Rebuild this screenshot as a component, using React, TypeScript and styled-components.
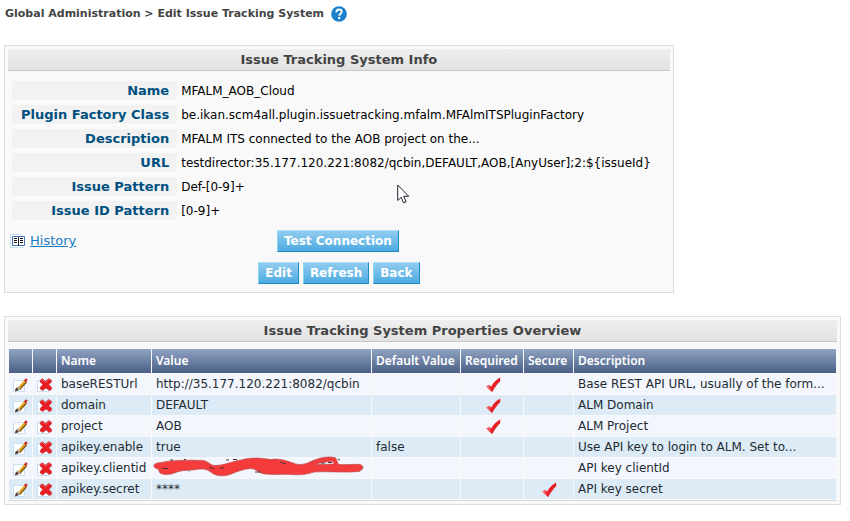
import React from "react";
import styled, { createGlobalStyle } from "styled-components";

const wide = `"DejaVu Sans", Verdana, sans-serif`;
const compact = `"Noto Sans", Tahoma, sans-serif`;

const GlobalStyle = createGlobalStyle`
  *, *::before, *::after { box-sizing: border-box; }
  body {
    margin: 0;
    background: #fff;
    color: #000;
    font-family: ${wide};
    font-size: 12px;
  }
`;

const Page = styled.main`
  display: flex;
  flex-direction: column;
  gap: 23px;
  padding: 6px 9px 16px 4px;
`;

const Breadcrumb = styled.header`
  display: flex;
  align-items: center;
  gap: 7px;
  height: 16px;
  color: #444;
  padding-left: 1px;
`;

const Crumbs = styled.h1`
  margin: 0;
  font-size: 11px;
  font-weight: 700;
  line-height: 16px;
  white-space: nowrap;
`;

const HelpLink = styled.a`
  display: block;
  width: 16px;
  height: 16px;
`;

const Panel = styled.section<{ $hug?: boolean }>`
  width: ${(p) => (p.$hug ? "fit-content" : "100%")};
  padding: 3px;
  background: #f9f9f9;
  border: 1px solid #ddd;
`;

const PanelTitle = styled.h2`
  margin: 0;
  height: 22px;
  border-bottom: 1px solid #c8c8c8;
  background: linear-gradient(#efefef, #e2e2e2);
  color: #444;
  font-size: 13px;
  font-weight: 700;
  line-height: 21px;
  text-align: center;
`;

const Fields = styled.dl`
  display: grid;
  grid-template-columns: auto 1fr;
  gap: 4px;
  margin: 0;
  padding: 10px 4px 0;
`;

const FieldLabel = styled.dt`
  height: 20px;
  padding: 0 8px 0 9px;
  border-bottom: 1px solid #fff;
  background: #f2f2f2;
  color: #00507f;
  font-size: 13px;
  font-weight: 700;
  line-height: 19px;
  text-align: right;
`;

const FieldValue = styled.dd`
  margin: 0;
  padding-right: 15px;
  line-height: 20px;
  white-space: nowrap;
`;

const Actions = styled.div`
  display: grid;
  grid-template-columns: 1fr auto 1fr;
  align-items: center;
  padding: 9px 4px 0 2px;
`;

const HistoryLink = styled.a`
  display: inline-flex;
  align-items: center;
  gap: 4px;
  justify-self: start;
  color: #1a7bc4;
  font-size: 13px;
  line-height: 16px;
`;

const ButtonRow = styled.div`
  display: flex;
  justify-content: center;
  gap: 4px;
  padding: 10px 0 5px;
`;

const Button = styled.button`
  height: 22px;
  padding: 0 6px;
  border: 1px solid;
  border-color: #a5e2fb #1f8ac8 #1f8ac8 #8fd5f5;
  background: linear-gradient(#92ccf0, #4dabe0);
  color: #fff;
  font-family: ${wide};
  font-size: 12px;
  font-weight: 700;
  line-height: 20px;
`;

const TableFrame = styled.div`
  padding: 6px 0 0;
  border-bottom: 1px solid #d8d8d8;
`;

const Table = styled.table`
  width: 100%;
  border-spacing: 1px;
  color: #222b33;
`;

const ColumnHead = styled.th`
  height: 24px;
  padding: 0 3px 0 4px;
  background: linear-gradient(#91a3c2, #495f86);
  color: #fff;
  font-family: ${compact};
  font-size: 12px;
  font-weight: 600;
  line-height: 22px;
  text-align: left;
  white-space: nowrap;
`;

const Row = styled.tr`
  background: #f3f6fc;
  &:nth-child(even) {
    background: #ddebf6;
  }
`;

const Cell = styled.td<{ $align?: string }>`
  height: 20px;
  padding: 0 3px 0 4px;
  line-height: 20px;
  text-align: ${(p) => p.$align ?? "left"};
  white-space: nowrap;
  svg {
    display: inline-block;
    vertical-align: top;
    margin-top: 3px;
  }
`;

const IconButton = styled.button`
  display: block;
  width: 16px;
  height: 20px;
  margin: 0;
  padding: 0;
  border: 0;
  background: none;
`;

const Redacted = styled.span`
  display: block;
  width: 0;
  height: 20px;
  svg {
    margin: -1px 0 0 -3px;
    overflow: visible;
  }
`;

const Pointer = styled.svg`
  position: absolute;
  left: 397px;
  top: 184px;
  pointer-events: none;
`;

const HelpIcon = () => (
  <svg width="16" height="16" viewBox="0 0 16 16" aria-hidden="true">
    <circle cx="8" cy="8" r="7.8" fill="#1b7fcb" />
    <path d="M5.4 6.2C5.4 4.3 6.5 3.5 8 3.5s2.7.9 2.7 2.3c0 1.9-2.4 1.9-2.4 3.9" fill="none" stroke="#fff" strokeWidth="1.9" />
    <circle cx="8.2" cy="12" r="1.2" fill="#fff" />
  </svg>
);

const HistoryIcon = () => (
  <svg width="16" height="14" viewBox="0 0 16 14" aria-hidden="true">
    <path d="M.5.5h9l3 3v10H.5z" fill="#fff" stroke="#c6e0f1" />
    <path d="M2.5 2.5h12v9h-12z" fill="#fff" stroke="#4a6eb4" />
    <path d="M8.5 3v9" stroke="#222" />
    <path d="M4 4.5h3M4 6.5h3M4 8.5h3M10 4.5h3M10 6.5h3M10 8.5h3" stroke="#111" />
  </svg>
);

const Sheet = () => <path d="M.5 2.5h11v11H.5z" fill="#fff" stroke="#c5e1f2" />;

const PencilIcon = () => (
  <svg width="16" height="15" viewBox="0 0 16 15" aria-hidden="true">
    <Sheet />
    <path d="M2 13.4c.1-2.3.7-3.7 2.3-3.9l1.6 1.6c-.2 1.8-1.7 2.1-3.9 2.3z" fill="#5a4238" />
    <path d="M4.7 10l6.7-8 2.4 2-7 7.9z" fill="#e5a51c" />
    <path d="M6.4 11.8l7-7.7" stroke="#6b4410" strokeWidth="1.1" />
    <path d="M3.8 9.6l1.2-1.3 2.5 2.2-1.2 1.4z" fill="#b9b2a2" />
    <path d="M10.9 2.4l1.5-1.7c1.3-.5 2.5.7 1.9 1.8l-1.4 1.7z" fill="#cf2a2c" />
  </svg>
);

const DeleteIcon = () => (
  <svg width="16" height="15" viewBox="0 0 16 15" aria-hidden="true">
    <Sheet />
    <path
      d="M3.2 2.2l2.1-1.5 3.2 2.5 3.2-2.7 2.8 1.8-.2 1.9-2.5 2.3 2.9 3-.3 2-2.1 1.1-3.3-2.6-3.3 2.6-2.6-1.7.3-1.8 2.6-2.6-2.9-2.5z"
      fill="#e81e25"
      stroke="#b5202a"
      strokeWidth=".5"
    />
    <path d="M4.2 2.5l1.2-.8 3.1 2.6 3.2-2.8 1.3.8" fill="none" stroke="#f5686c" strokeWidth=".8" />
  </svg>
);

const CheckIcon = ({ label }: { label: string }) => (
  <svg width="16" height="15" viewBox="0 0 16 15" role="img" aria-label={label}>
    <defs>
      <linearGradient id="tick" x1="0" x2="1">
        <stop offset="0" stopColor="#f2a3a3" />
        <stop offset=".4" stopColor="#ef2026" />
        <stop offset="1" stopColor="#e11d24" />
      </linearGradient>
    </defs>
    <path d="M.7 9.4L4 7.8l2.3 1.6C8.6 5.6 11.2 2.6 15.2.6v3.5C12 7 9.4 10.6 7 15z" fill="url(#tick)" />
    <path d="M15 4.1C12 7 9.4 10.6 7 14.8" fill="none" stroke="#c93a3e" strokeWidth=".6" />
  </svg>
);

const Scribble = () => (
  <svg width="212" height="20" viewBox="0 0 212 20" role="img" aria-label="Hidden value">
    <path
      d="M1 8C3 5 9 6 13 4.500C25 3 40 3 50 3.500C55 4 57 8 61 8.500C70 9 80 4 88 3C98 0 108 1 118 2.500C126 1 134 4 140 6C147 9 153 7 159 4C166 1 173-1 181 .5C185 1 183 5 186 7.500C192 8 200 7 207 7.500C212 9 210 13 206 14.500C192 16 176 14 161 15C152 18 145 18 138 17.500C130 17 120 18 112 17C105 16 104 12 98 11.500C90 12 83 15 77 17.500C69 20 62 19 57 14.500C52 11 46 12 40 13C32 13 25 14 20 16.500C15 18 6 18 6 14C6 11 0 12 1 8z"
      fill="#f43c3c"
      stroke="#b85050"
      strokeWidth=".7"
    />
    <path d="M162 7.500C168 5.500 174 4.500 180 4.500L181 7z" fill="#f3f6fc" stroke="#a84a50" strokeWidth=".5" />
    <path
      d="M17 3h3M31 2.500h2M73 3h3M80 2.500h4M10 11.500h5M56 10l5 2M67 11h4M127 5l6 2M102 15h6M168 6h4M175 5.500h4M185 2l2 1M36 13.500v1"
      fill="none"
      stroke="#4a3038"
    />
  </svg>
);

const fields = [
  ["Name", "MFALM_AOB_Cloud"],
  ["Plugin Factory Class", "be.ikan.scm4all.plugin.issuetracking.mfalm.MFAlmITSPluginFactory"],
  ["Description", "MFALM ITS connected to the AOB project on the..."],
  ["URL", "testdirector:35.177.120.221:8082/qcbin,DEFAULT,AOB,[AnyUser];2:${issueId}"],
  ["Issue Pattern", "Def-[0-9]+"],
  ["Issue ID Pattern", "[0-9]+"],
];

type Property = {
  name: string;
  value?: string;
  fallback?: string;
  required?: boolean;
  secure?: boolean;
  description: string;
};

const properties: Property[] = [
  { name: "baseRESTUrl", value: "http://35.177.120.221:8082/qcbin", required: true, description: "Base REST API URL, usually of the form..." },
  { name: "domain", value: "DEFAULT", required: true, description: "ALM Domain" },
  { name: "project", value: "AOB", required: true, description: "ALM Project" },
  { name: "apikey.enable", value: "true", fallback: "false", description: "Use API key to login to ALM. Set to..." },
  { name: "apikey.clientid", description: "API key clientId" },
  { name: "apikey.secret", value: "****", secure: true, description: "API key secret" },
];

const IconCol = styled.col`
  width: 23px;
`;
const NameCol = styled.col`
  width: 94px;
`;
const ValueCol = styled.col`
  width: 219px;
`;
const DefaultCol = styled.col`
  width: 88px;
`;
const RequiredCol = styled.col`
  width: 62px;
`;
const SecureCol = styled.col`
  width: 49px;
`;

export default function App() {
  return (
    <>
      <GlobalStyle />
      <Page>
        <Breadcrumb>
          <Crumbs>Global Administration &gt; Edit Issue Tracking System</Crumbs>
          <HelpLink href="#help" aria-label="Help">
            <HelpIcon />
          </HelpLink>
        </Breadcrumb>

        <Panel $hug>
          <PanelTitle>Issue Tracking System Info</PanelTitle>
          <Fields>
            {fields.map(([label, value]) => (
              <React.Fragment key={label}>
                <FieldLabel>{label}</FieldLabel>
                <FieldValue>{value}</FieldValue>
              </React.Fragment>
            ))}
          </Fields>
          <Actions>
            <HistoryLink href="#history">
              <HistoryIcon />
              History
            </HistoryLink>
            <Button type="button">Test Connection</Button>
          </Actions>
          <ButtonRow>
            <Button type="button">Edit</Button>
            <Button type="button">Refresh</Button>
            <Button type="button">Back</Button>
          </ButtonRow>
        </Panel>

        <Panel>
          <PanelTitle>Issue Tracking System Properties Overview</PanelTitle>
          <TableFrame>
            <Table>
              <colgroup>
                <IconCol />
                <IconCol />
                <NameCol />
                <ValueCol />
                <DefaultCol />
                <RequiredCol />
                <SecureCol />
                <col />
              </colgroup>
              <thead>
                <tr>
                  <ColumnHead aria-label="Edit" />
                  <ColumnHead aria-label="Delete" />
                  <ColumnHead>Name</ColumnHead>
                  <ColumnHead>Value</ColumnHead>
                  <ColumnHead>Default Value</ColumnHead>
                  <ColumnHead>Required</ColumnHead>
                  <ColumnHead>Secure</ColumnHead>
                  <ColumnHead>Description</ColumnHead>
                </tr>
              </thead>
              <tbody>
                {properties.map((p) => (
                  <Row key={p.name}>
                    <Cell>
                      <IconButton type="button" aria-label={`Edit ${p.name}`}>
                        <PencilIcon />
                      </IconButton>
                    </Cell>
                    <Cell>
                      <IconButton type="button" aria-label={`Delete ${p.name}`}>
                        <DeleteIcon />
                      </IconButton>
                    </Cell>
                    <Cell>{p.name}</Cell>
                    <Cell>
                      {p.value ?? (
                        <Redacted>
                          <Scribble />
                        </Redacted>
                      )}
                    </Cell>
                    <Cell>{p.fallback}</Cell>
                    <Cell $align="center">{p.required && <CheckIcon label="Required" />}</Cell>
                    <Cell $align="center">{p.secure && <CheckIcon label="Secure" />}</Cell>
                    <Cell>{p.description}</Cell>
                  </Row>
                ))}
              </tbody>
            </Table>
          </TableFrame>
        </Panel>
      </Page>
      <Pointer width="13" height="20" viewBox="0 0 13 20" aria-hidden="true">
        <path d="M.7 1v15.5l3.5-3.3 2.3 5.6 2.6-1.1-2.4-5.4h5z" fill="#fff" stroke="#223" strokeWidth="1" />
      </Pointer>
    </>
  );
}
